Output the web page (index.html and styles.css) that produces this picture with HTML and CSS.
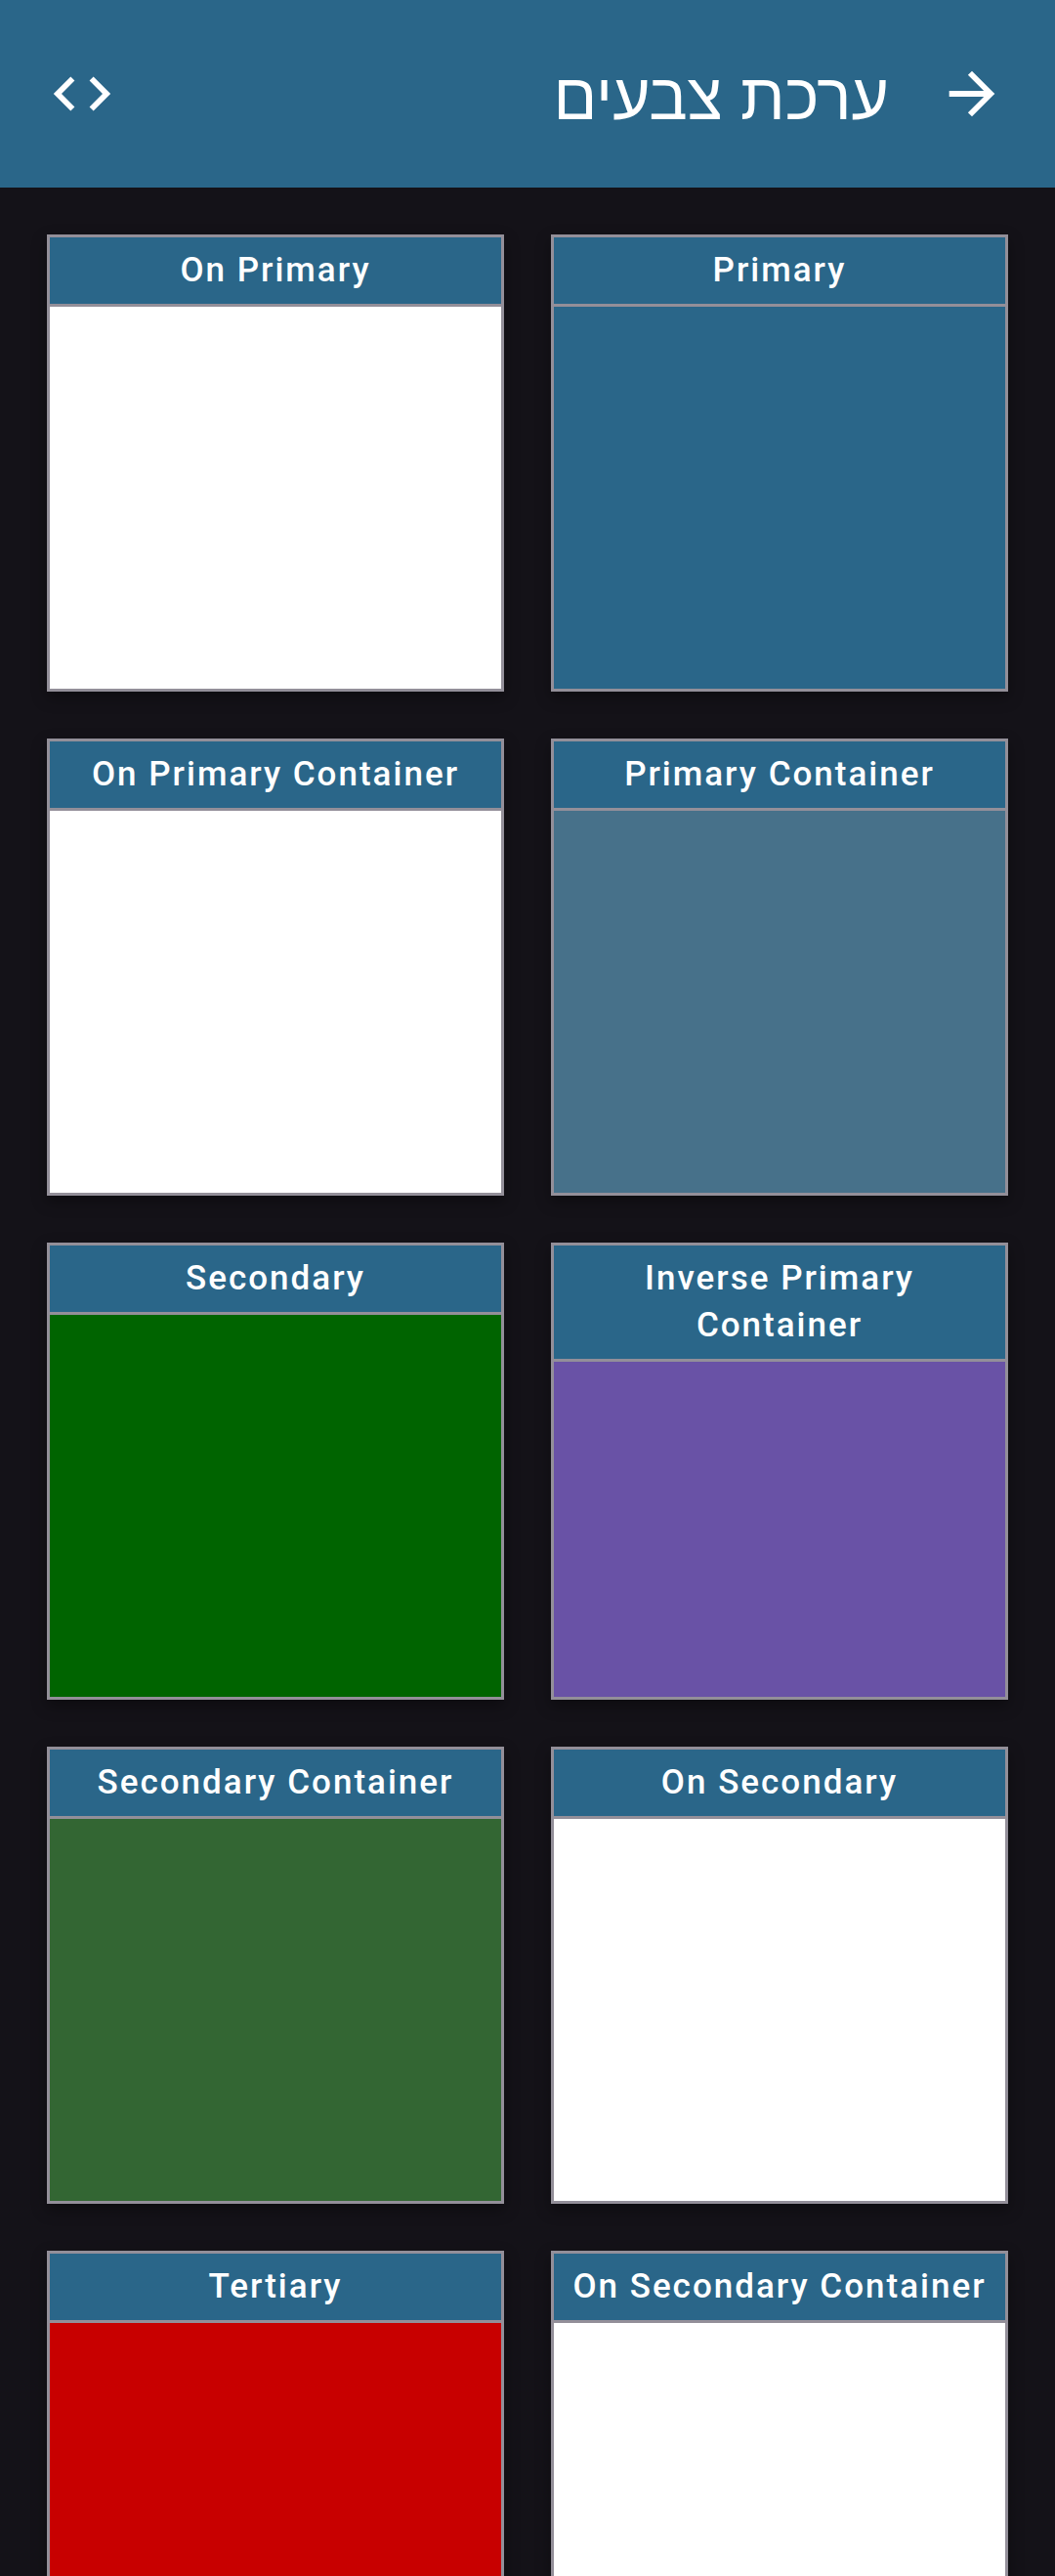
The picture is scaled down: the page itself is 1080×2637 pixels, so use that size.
FILE: index.html
```html
<!DOCTYPE html>
<html lang="he">
<head>
<meta charset="utf-8">
<title>ערכת צבעים</title>
<link rel="stylesheet" href="styles.css">
</head>
<body>
<header class="appbar">
  <button class="icon-btn" aria-label="code">
    <svg viewBox="0 0 24 24" width="70" height="70"><path fill="#fff" d="M9.4 16.6L4.8 12l4.6-4.6L8 6l-6 6 6 6 1.4-1.4zm5.2 0l4.6-4.6-4.6-4.6L16 6l6 6-6 6-1.4-1.4z"/></svg>
  </button>
  <h1 class="appbar-title" dir="rtl">ערכת צבעים</h1>
  <button class="icon-btn" aria-label="next">
    <svg viewBox="0 0 24 24" width="70" height="70"><path fill="#fff" d="M12 4l-1.41 1.41L16.17 11H4v2h12.17l-5.58 5.59L12 20l8-8z"/></svg>
  </button>
</header>
<main class="grid">
  <div class="card"><div class="card-title">On Primary</div><div class="swatch sw-white"></div></div>
  <div class="card"><div class="card-title">Primary</div><div class="swatch sw-primary"></div></div>
  <div class="card"><div class="card-title">On Primary Container</div><div class="swatch sw-white"></div></div>
  <div class="card"><div class="card-title">Primary Container</div><div class="swatch sw-primary-container"></div></div>
  <div class="card"><div class="card-title">Secondary</div><div class="swatch sw-secondary"></div></div>
  <div class="card"><div class="card-title">Inverse Primary Container</div><div class="swatch sw-inverse"></div></div>
  <div class="card"><div class="card-title">Secondary Container</div><div class="swatch sw-secondary-container"></div></div>
  <div class="card"><div class="card-title">On Secondary</div><div class="swatch sw-white"></div></div>
  <div class="card"><div class="card-title">Tertiary</div><div class="swatch sw-tertiary"></div></div>
  <div class="card"><div class="card-title">On Secondary Container</div><div class="swatch sw-white"></div></div>
</main>
</body>
</html>
```
FILE: styles.css
```css
html, body {
  margin: 0;
  padding: 0;
  background: #141218;
}
body {
  font-family: Roboto, "Noto Sans", sans-serif;
  overflow: hidden;
}
.appbar {
  height: 192px;
  background: #2a6689;
  display: flex;
  align-items: center;
  padding: 0 50px 0 49px;
  box-sizing: border-box;
}
.icon-btn {
  width: 70px;
  height: 70px;
  padding: 0;
  border: 0;
  background: none;
  display: block;
}
.icon-btn svg { display: block; }
.appbar-title {
  flex: 1;
  margin: 6px 50px 0 0;
  text-align: right;
  color: #fff;
  font-family: "Liberation Sans", "DejaVu Sans", sans-serif;
  font-weight: 400;
  font-size: 66px;
  line-height: 1;
}
.grid {
  display: grid;
  grid-template-columns: 468px 468px;
  gap: 48px;
  padding: 48px;
}
.card {
  width: 468px;
  height: 468px;
  box-sizing: border-box;
  border: 3px solid #938f99;
  display: flex;
  flex-direction: column;
  box-shadow: 0 6px 14px rgba(0,0,0,0.35);
}
.card-title {
  background: #2a6689;
  color: #fff;
  text-align: center;
  font-weight: 500;
  font-size: 35px;
  line-height: 48px;
  letter-spacing: 2px;
  padding: 10px 16px;
  border-bottom: 3px solid #938f99;
}
.swatch { flex: 1; }
.sw-white { background: #ffffff; }
.sw-primary { background: #2a6689; }
.sw-primary-container { background: #47718a; }
.sw-secondary { background: #006400; }
.sw-inverse { background: #6952a6; }
.sw-secondary-container { background: #336633; }
.sw-tertiary { background: #c80000; }
```
